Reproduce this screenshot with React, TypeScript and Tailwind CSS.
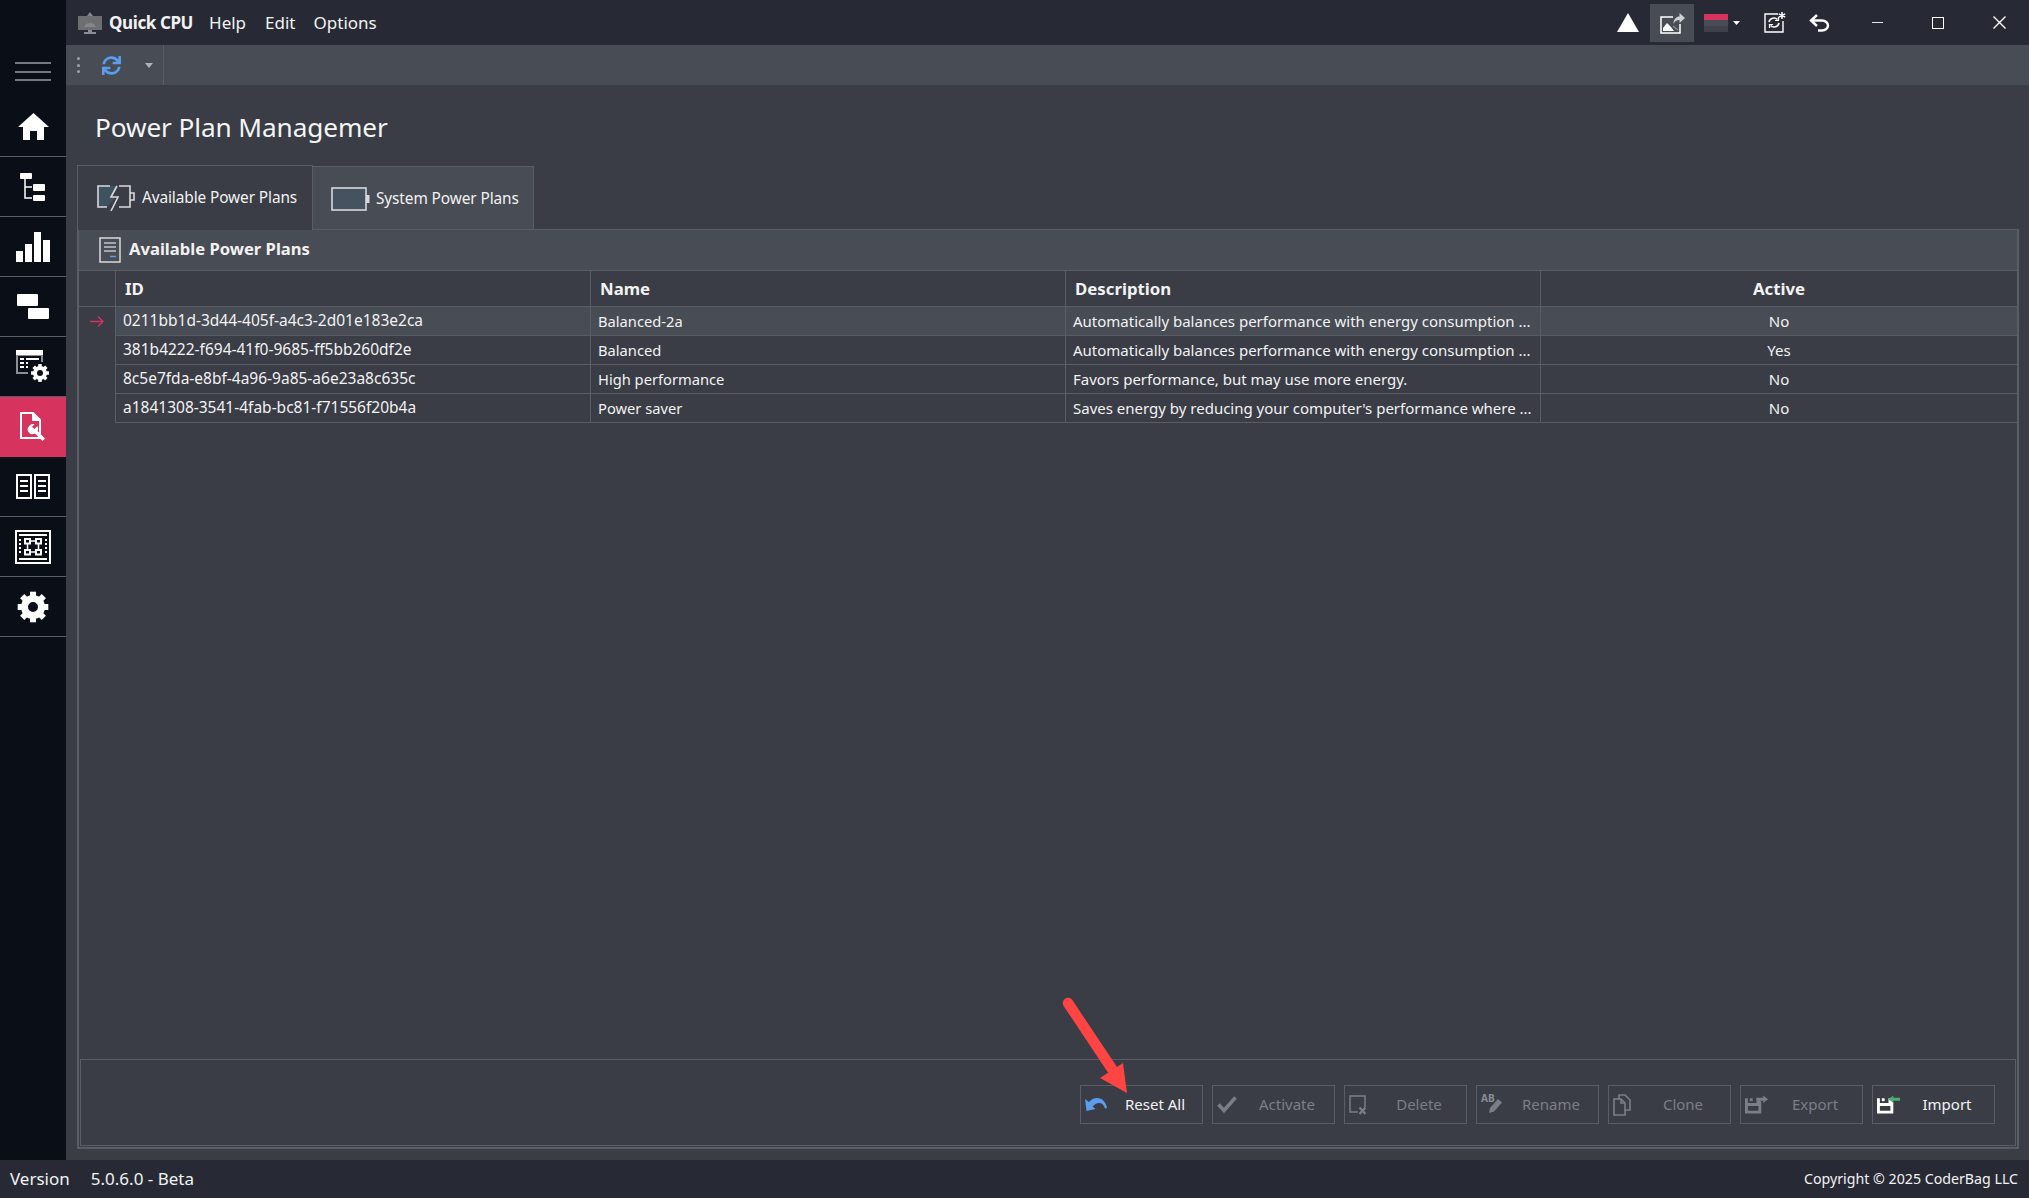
import React from "react";
import { FaSync } from "react-icons/fa";

const font = { fontFamily: '"Noto Sans", "Open Sans", sans-serif' };

const plans = [
  {
    id: "0211bb1d-3d44-405f-a4c3-2d01e183e2ca",
    name: "Balanced-2a",
    description: "Automatically balances performance with energy consumption ...",
    active: "No",
  },
  {
    id: "381b4222-f694-41f0-9685-ff5bb260df2e",
    name: "Balanced",
    description: "Automatically balances performance with energy consumption ...",
    active: "Yes",
  },
  {
    id: "8c5e7fda-e8bf-4a96-9a85-a6e23a8c635c",
    name: "High performance",
    description: "Favors performance, but may use more energy.",
    active: "No",
  },
  {
    id: "a1841308-3541-4fab-bc81-f71556f20b4a",
    name: "Power saver",
    description: "Saves energy by reducing your computer's performance where ...",
    active: "No",
  },
];

function HomeIcon() {
  return (
    <svg width="31" height="27" viewBox="0 0 31 27" fill="white">
      <path d="M15.500 0L31 14h-5v13h-7v-9h-7v9H5V14H0z" />
    </svg>
  );
}

function Gear({ cx, cy, r, hole, teeth, color, tw }: { cx: number; cy: number; r: number; hole: number; teeth: number; color: string; tw: number }) {
  const sw = r - hole;
  return (
    <g>
      <circle cx={cx} cy={cy} r={hole + sw / 2} fill="none" stroke={color} strokeWidth={sw} />
      {Array.from({ length: teeth }).map((_, i) => (
        <rect
          key={i}
          x={cx - tw / 2}
          y={cy - r - tw * 0.55}
          width={tw}
          height={tw}
          fill={color}
          transform={`rotate(${(360 / teeth) * i} ${cx} ${cy})`}
        />
      ))}
    </g>
  );
}

function GearIcon() {
  return (
    <svg width="32" height="32" viewBox="0 0 32 32">
      <Gear cx={16} cy={16} r={12} hole={5} teeth={8} color="white" tw={6} />
    </svg>
  );
}

function TreeIcon() {
  return (
    <svg width="26" height="28" viewBox="0 0 26 28" fill="white">
      <rect x="0" y="0" width="12" height="6" rx="1" />
      <rect x="13" y="11" width="12" height="7" rx="1" />
      <rect x="13" y="22" width="12" height="6" rx="1" />
      <path d="M5 6v19h7M5 14h7" fill="none" stroke="white" strokeWidth="1.5" />
    </svg>
  );
}

function BarsIcon() {
  return (
    <svg width="34" height="30" viewBox="0 0 34 30" fill="white">
      <rect x="0" y="19" width="7" height="11" />
      <rect x="9" y="12" width="7" height="18" />
      <rect x="18" y="0" width="7" height="30" />
      <rect x="27" y="8" width="7" height="22" />
    </svg>
  );
}

function StepsIcon() {
  return (
    <svg width="32" height="25" viewBox="0 0 32 25" fill="white">
      <rect x="0" y="0" width="21" height="12" rx="1" />
      <rect x="11" y="14" width="21" height="11" rx="1" />
    </svg>
  );
}

function TableGearIcon() {
  return (
    <svg width="34" height="33" viewBox="0 0 34 33">
      <path d="M0 5h27v10H14v9H0z" fill="#8b8e96" />
      <rect x="0" y="0" width="27" height="5" fill="white" />
      <rect x="2" y="6" width="23" height="16" fill="#0a0e17" />
      <path d="M4 9h4M10 9h13M4 13h4M10 13h11M4 17h4M10 17h6" stroke="white" strokeWidth="2" />
      <rect x="12" y="12" width="22" height="21" fill="#0a0e17" />
      <Gear cx={24} cy={23} r={7} hole={3} teeth={8} color="white" tw={3.500} />
    </svg>
  );
}

function DocWrenchIcon() {
  return (
    <svg width="26" height="30" viewBox="0 0 26 30" fill="none">
      <path d="M1 1h12l7 7v18H1z" stroke="white" strokeWidth="2" />
      <path d="M12 1v8h8z" fill="white" />
      <path d="M15 13a5 5 0 1 0 2.500 6L25 27l-2 2.500-7.500-7.500" fill="#d6335f" />
      <path d="M15.500 12.500l-3 3 2 3 3.500-2.500" fill="#d6335f" />
      <path
        d="M14.500 12.300A5.500 5.500 0 0 0 8 19.500 5.500 5.500 0 0 0 15 21.500L22.500 29 25 26.500 17.500 19A5.500 5.500 0 0 0 17.500 14l-3 3-2.500-2z"
        fill="white"
      />
    </svg>
  );
}

function BookIcon() {
  return (
    <svg width="34" height="25" viewBox="0 0 34 25" fill="none" stroke="white" strokeWidth="2">
      <rect x="1" y="1" width="14" height="23" />
      <rect x="19" y="1" width="14" height="23" />
      <path d="M4 7h8M4 12h8M4 17h8M22 7h8M22 12h8M22 17h8" />
    </svg>
  );
}

function BoardIcon() {
  return (
    <svg width="36" height="34" viewBox="0 0 36 34" fill="none" stroke="white">
      <rect x="1" y="1" width="34" height="32" strokeWidth="2" />
      <path d="M4 5h28M4 29h28" strokeWidth="2" />
      <path d="M5 9v16M31 9v16" strokeWidth="2" strokeDasharray="2 2" />
      <rect x="10" y="9" width="5" height="4.500" strokeWidth="2" />
      <rect x="21" y="9" width="5" height="4.500" strokeWidth="2" />
      <rect x="10" y="20" width="5" height="4.500" strokeWidth="2" />
      <rect x="21" y="20" width="5" height="4.500" strokeWidth="2" />
      <path d="M15 11h6M15 22h6M12.500 13v7M23.500 13v7" strokeWidth="1.500" />
    </svg>
  );
}

function BatteryBoltIcon() {
  return (
    <svg width="39" height="27" viewBox="0 0 39 27" fill="none">
      <path d="M12 1H1v21h9l9-10h-5l6-11z" fill="#3e5260" />
      <path d="M13 1H1v21h9M22 1h11v21H22M33 8h4v7h-4" stroke="#d8d9dc" strokeWidth="1.6" />
      <path d="M20 1l-6 11h7l-7 14" stroke="#d8d9dc" strokeWidth="1.6" />
    </svg>
  );
}

function BatteryIcon() {
  return (
    <svg width="39" height="24" viewBox="0 0 39 24">
      <rect x="1" y="1" width="34" height="22" fill="#44535f" stroke="#d8d9dc" strokeWidth="1.6" />
      <rect x="35" y="8" width="3.5" height="8" fill="#d8d9dc" />
    </svg>
  );
}

function ListDocIcon() {
  return (
    <svg width="22" height="26" viewBox="0 0 22 26" fill="none">
      <rect x="1" y="1" width="20" height="24" stroke="#d8d9dc" strokeWidth="1.5" />
      <path d="M5 6h12M5 10h12M5 14h12" stroke="#c2c3c7" strokeWidth="1.5" />
      <path d="M11 19.5h6" stroke="#5c9df0" strokeWidth="1.5" />
    </svg>
  );
}

function ShareImageIcon() {
  return (
    <svg width="25" height="22" viewBox="0 0 25 22" fill="none">
      <path d="M13 5H1v16h19v-9" stroke="white" strokeWidth="1.5" />
      <path d="M3 19v-3l4-5 4 4 3 4z" fill="white" />
      <path d="M13.500 12c0-5 3-7.500 6-7.500V1l5.500 5-5.500 5V8c-3 0-5 1.500-6 4z" fill="#d0d1d4" />
      <path d="M13 14l5 4" stroke="#8b8e96" strokeWidth="1.5" />
    </svg>
  );
}

function RefreshStarIcon() {
  return (
    <svg width="22" height="21" viewBox="0 0 22 21" fill="none">
      <path d="M14 2H1v18h18V9" stroke="white" strokeWidth="1.4" />
      <path d="M5 10a5 5 0 0 1 8.500-2.500M15 11a5 5 0 0 1-8.500 2.500" stroke="white" strokeWidth="1.6" />
      <path d="M14.500 5v3.500H11M5.500 16v-3.500H9" stroke="white" strokeWidth="1.2" />
      <path d="M18 0v7M14.800 1.800l6.400 3.400M21.200 1.800l-6.400 3.400" stroke="white" strokeWidth="1.500" />
    </svg>
  );
}

function UndoIcon() {
  return (
    <svg width="21" height="18" viewBox="0 0 21 18" fill="none" stroke="white" strokeWidth="2.400">
      <path d="M8 1L2 6.500 8 12" />
      <path d="M2 6.500h11a6 5 0 0 1 0 10H9" />
    </svg>
  );
}

function ResetIcon() {
  return (
    <svg width="22" height="13" viewBox="0 0 22 13" fill="#5c9df0">
      <path d="M0 1l1.500 12 9-2-3-2.500C10 6 12 5 14 5c3 0 5 2 6 5.500l2-.5C21 4 17 0 12 0 9 0 6.500 1.500 4 4z" />
    </svg>
  );
}

function CheckIcon() {
  return (
    <svg width="20" height="17" viewBox="0 0 20 17" fill="none" stroke="#7b7e86" strokeWidth="3.500">
      <path d="M1.500 8.500l5.500 6L18.500 1.500" />
    </svg>
  );
}

function DeleteIcon() {
  return (
    <svg width="18" height="20" viewBox="0 0 18 20" fill="none" stroke="#7b7e86">
      <path d="M9 17H1V1h15v11" strokeWidth="1.500" />
      <path d="M10.500 12.500l6 6.500M16.500 12.500l-6 6.500" strokeWidth="2.200" />
    </svg>
  );
}

function RenameIcon() {
  return (
    <span className="relative block w-[21px] h-[18px]">
      <span className="absolute left-0 top-[-3px] text-[10px] font-bold leading-none text-[#8b8e96]">AB</span>
      <svg className="absolute left-[8px] top-[3px]" width="13" height="14" viewBox="0 0 13 14" fill="#7b7e86">
        <path d="M9 0l4 3.500-8 9L0 14l1-5z" />
      </svg>
    </span>
  );
}

function CloneIcon() {
  return (
    <svg width="18" height="22" viewBox="0 0 18 22" fill="none" stroke="#7b7e86" strokeWidth="1.600">
      <path d="M6 5V1h6l5 5v10h-5" />
      <path d="M1 5h7l4 4v12H1z" />
      <path d="M8 5v4h4" />
    </svg>
  );
}

function FloppyIcon({ color, arrow, flip }: { color: string; arrow: string; flip?: boolean }) {
  return (
    <svg width="24" height="19" viewBox="0 0 24 19">
      <path d="M0 3h3v5h9V3h1l4 4v12H0zM3 11v5h11v-5z" fill={color} fillRule="evenodd" />
      <path d="M5 3h3v3H5z" fill={color} />
      {flip ? (
        <path d="M24 2.500h-7V0l-5 4 5 4V5.500h7z" fill={arrow} />
      ) : (
        <path d="M12 2.500h7V0l5 4-5 4V5.500h-7z" fill={arrow} />
      )}
    </svg>
  );
}

const navItems = [
  { icon: <HomeIcon /> },
  { icon: <TreeIcon /> },
  { icon: <BarsIcon /> },
  { icon: <StepsIcon /> },
  { icon: <TableGearIcon /> },
  { icon: <DocWrenchIcon />, active: true },
  { icon: <BookIcon /> },
  { icon: <BoardIcon /> },
  { icon: <GearIcon /> },
];

const actions = [
  { label: "Reset All", icon: <ResetIcon />, enabled: true },
  { label: "Activate", icon: <CheckIcon /> },
  { label: "Delete", icon: <DeleteIcon /> },
  { label: "Rename", icon: <RenameIcon /> },
  { label: "Clone", icon: <CloneIcon /> },
  { label: "Export", icon: <FloppyIcon color="#7b7e86" arrow="#7b7e86" /> },
  { label: "Import", icon: <FloppyIcon color="#ffffff" arrow="#4caf70" flip />, enabled: true },
];

export default function App() {
  return (
    <div
      style={font}
      className="relative flex flex-col w-[2029px] h-[1198px] overflow-hidden bg-[#3a3d46] text-[15px] text-[#f2f2f2]"
    >
      <div className="flex flex-1 min-h-0">
        {/* Sidebar */}
        <div className="flex flex-col w-[66px] shrink-0 bg-[#0a0e17]">
          <div className="h-[97px] pt-[62px] pl-[15px] shrink-0">
            <div className="flex flex-col gap-[6.500px] w-[36px]">
              <div className="h-[2px] bg-[#75787f]" />
              <div className="h-[2px] bg-[#75787f]" />
              <div className="h-[2px] bg-[#75787f]" />
            </div>
          </div>
          {navItems.map((item, i) => (
            <div
              key={i}
              className={`flex items-center justify-center h-[60px] shrink-0 border-b ${
                item.active ? "bg-[#d6335f] border-[#d6335f]" : "border-[#5a5d66]"
              }`}
            >
              {item.icon}
            </div>
          ))}
        </div>

        <div className="flex flex-col flex-1 min-w-0">
          {/* Title bar */}
          <div className="flex items-center h-[45px] shrink-0 bg-[#272a35] pl-[12px] text-[17px]">
            <svg width="24" height="22" viewBox="0 0 24 22" className="mr-[7px]">
              <rect x="0" y="4" width="24" height="14" fill="#6c6e72" />
              <path d="M6 15a6.500 6.500 0 0 1 12 0z" fill="#85878a" />
              <path d="M15 4l-3-4-3 4z" fill="#85878a" />
              <rect x="10" y="18" width="4" height="2" fill="#8b8e96" />
              <rect x="6" y="20" width="12" height="2" fill="#8b8e96" />
            </svg>
            <span className="font-bold mr-[16px] tracking-[-0.4px]">Quick CPU</span>
            <span className="mr-[19px]">Help</span>
            <span className="mr-[18px]">Edit</span>
            <span>Options</span>
            <div className="flex-1" />
            <svg width="22" height="19" viewBox="0 0 22 19" className="mr-[11px]" fill="white">
              <path d="M11 0l11 19H0z" />
            </svg>
            <div className="flex items-center justify-center w-[44px] h-[38px] bg-[#484c55] mr-[10px]">
              <ShareImageIcon />
            </div>
            <div className="flex flex-col w-[24px] h-[18px] mr-[5px]">
              <div className="h-[6px] bg-[#d6335f]" />
              <div className="h-[6px] bg-[#484c55]" />
              <div className="h-[6px] bg-[#3f424b]" />
            </div>
            <svg width="7" height="4" viewBox="0 0 7 4" className="mr-[24px]" fill="white">
              <path d="M0 0h7L3.500 4z" />
            </svg>
            <span className="mr-[23px]">
              <RefreshStarIcon />
            </span>
            <span className="mr-[42px]">
              <UndoIcon />
            </span>
            <div className="w-[11px] h-[1.500px] bg-[#e6e6e6] mr-[49px]" />
            <div className="w-[12px] h-[12px] border-[1.500px] border-white mr-[49px]" />
            <svg width="13" height="13" viewBox="0 0 13 13" className="mr-[23px]" stroke="white" strokeWidth="1.400">
              <path d="M0.500 0.500l12 12M12.500 0.500l-12 12" />
            </svg>
          </div>

          {/* Toolbar */}
          <div className="flex items-center h-[40px] shrink-0 bg-[#484c55]">
            <div className="flex items-center w-[98px] h-full border-r border-[#5a5d66]">
              <div className="flex flex-col gap-[3.500px] ml-[11px] mr-[22px]">
                <div className="w-[3px] h-[3px] rounded-full bg-[#a0a2a8]" />
                <div className="w-[3px] h-[3px] rounded-full bg-[#a0a2a8]" />
                <div className="w-[3px] h-[3px] rounded-full bg-[#a0a2a8]" />
              </div>
              <FaSync size={19} color="#5c9df0" />
              <svg width="8" height="5" viewBox="0 0 8 5" className="ml-[24px]" fill="#b0b2b6">
                <path d="M0 0h8L4 5z" />
              </svg>
            </div>
          </div>

          {/* Page */}
          <div className="flex flex-col flex-1 min-h-0 pl-[11px] pr-[10px] pb-[11px]">
            <div className="flex items-center h-[80px] shrink-0 pl-[18px] pt-[6px] text-[26.200px] tracking-[-0.1px] text-[#f5f5f5]">
              Power Plan Managemer
            </div>

            <div className="flex items-end h-[65px] shrink-0 -mb-px">
              <div className="flex items-center w-[236px] h-[65px] pl-[19px] gap-[6px] bg-[#3a3d46] border border-b-0 border-[#5a5d66] z-10">
                <BatteryBoltIcon />
                <span className="text-[15.400px] tracking-[-0.1px]">Available Power Plans</span>
              </div>
              <div className="flex items-center w-[221px] h-[64px] pl-[18px] gap-[6px] bg-[#484c55] border border-l-0 border-b-0 border-[#5a5d66]">
                <BatteryIcon />
                <span className="text-[15.400px] tracking-[-0.1px]">System Power Plans</span>
              </div>
            </div>

            <div className="flex flex-col flex-1 min-h-0 border-2 border-[#5a5d66] border-t-[1px]">
              <div className="flex items-center h-[41px] shrink-0 pl-[20px] pb-[1px] gap-[8px] bg-[#484c55] border-b border-[#5a5d66]">
                <ListDocIcon />
                <span className="font-bold text-[16.600px]">Available Power Plans</span>
              </div>

              {/* Table */}
              <div className="grid grid-cols-[36px_475px_475px_475px_1fr] shrink-0">
                <div className="h-[36px] border-b border-[#5a5d66]" />
                {["ID", "Name", "Description"].map((h) => (
                  <div
                    key={h}
                    className="flex items-center h-[36px] pl-[9px] text-[16.800px] font-bold border-l border-b border-[#5a5d66]"
                  >
                    {h}
                  </div>
                ))}
                <div className="flex items-center justify-center h-[36px] text-[16.800px] font-bold border-l border-b border-[#5a5d66]">
                  Active
                </div>
                {plans.map((plan, i) => (
                  <React.Fragment key={plan.id}>
                    <div className="flex items-center h-[29px] pl-[11px]">
                      {i === 0 && (
                        <svg width="14" height="11" viewBox="0 0 14 11" fill="none" stroke="#d6335f" strokeWidth="1.300">
                          <path d="M0 5.500h13M8 0.500l5 5-5 5" />
                        </svg>
                      )}
                    </div>
                    <div
                      className={`flex items-center h-[29px] pl-[7px] text-[15.500px] whitespace-nowrap border-l border-b border-[#5a5d66] ${
                        i === 0 ? "bg-[#484c55]" : ""
                      }`}
                    >
                      {plan.id}
                    </div>
                    <div
                      className={`flex items-center h-[29px] pl-[7px] text-[14.700px] whitespace-nowrap border-l border-b border-[#5a5d66] ${
                        i === 0 ? "bg-[#484c55]" : ""
                      }`}
                    >
                      {plan.name}
                    </div>
                    <div
                      className={`flex items-center h-[29px] pl-[7px] whitespace-nowrap overflow-hidden border-l border-b border-[#5a5d66] ${
                        i === 0 ? "bg-[#484c55]" : ""
                      }`}
                    >
                      {plan.description}
                    </div>
                    <div
                      className={`flex items-center justify-center h-[29px] border-l border-b border-[#5a5d66] ${
                        i === 0 ? "bg-[#484c55]" : ""
                      }`}
                    >
                      {plan.active}
                    </div>
                  </React.Fragment>
                ))}
              </div>

              <div className="flex-1" />

              {/* Actions */}
              <div className="flex items-center justify-end gap-[9px] h-[87px] shrink-0 mx-px mb-px pt-[4px] pr-[20px] border border-[#5a5d66]">
                {actions.map((a) => (
                  <div
                    key={a.label}
                    className={`flex items-center w-[123px] h-[39px] border border-[#5a5d66] ${
                      a.enabled ? "text-[#f2f2f2]" : "text-[#7b7e86]"
                    }`}
                  >
                    <div className="flex items-center w-[27px] shrink-0 pl-[4px]">{a.icon}</div>
                    <div className="flex-1 text-center">{a.label}</div>
                  </div>
                ))}
              </div>
            </div>
          </div>
        </div>
      </div>

      {/* Footer */}
      <div className="flex items-center justify-between h-[38px] shrink-0 bg-[#272a35] pl-[10px] pr-[11px] text-[17px]">
        <div className="flex gap-[21px]">
          <span>Version</span>
          <span>5.0.6.0 - Beta</span>
        </div>
        <span className="text-[14.200px]">Copyright © 2025 CoderBag LLC</span>
      </div>

      {/* Annotation arrow */}
      <svg className="absolute left-[1060px] top-[995px]" width="75" height="105" viewBox="0 0 75 105" fill="none">
        <path d="M8 8L52 74" stroke="#ff4444" strokeWidth="10.500" strokeLinecap="round" />
        <path d="M67 98L40 83 63 68z" fill="#ff4444" />
      </svg>
    </div>
  );
}
